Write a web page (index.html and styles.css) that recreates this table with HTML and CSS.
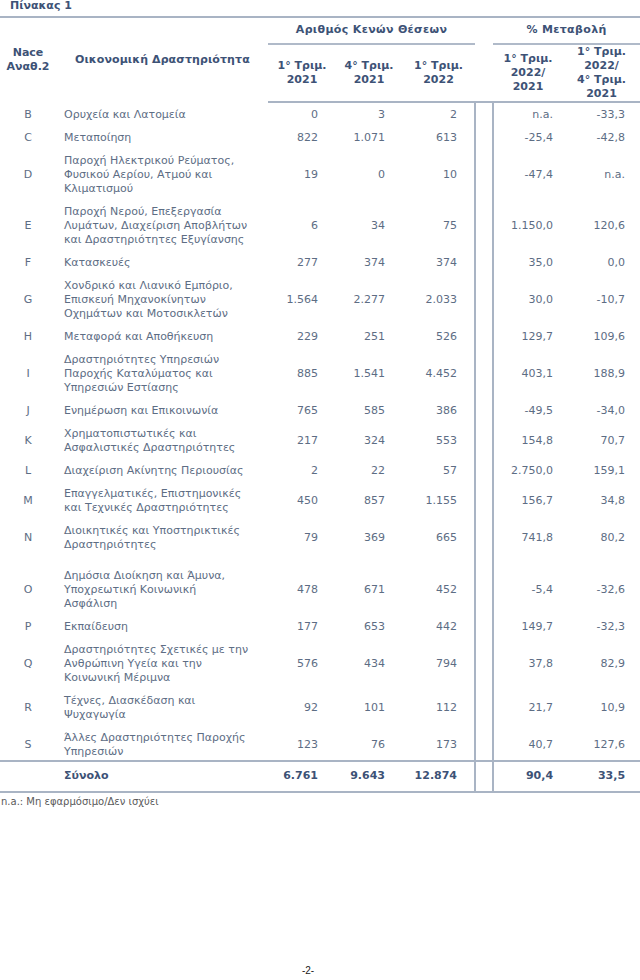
FILE: index.html
```html
<!DOCTYPE html>
<html lang="el">
<head>
<meta charset="utf-8">
<title>Πίνακας 1</title>
<link rel="stylesheet" href="styles.css">
</head>
<body>
<div class="page">
  <div class="title">Πίνακας 1</div>
  <table class="tbl">
    <colgroup>
      <col class="c-code"><col class="c-act"><col class="c-n1"><col class="c-n2"><col class="c-n3"><col class="c-gap"><col class="c-p1"><col class="c-p2">
    </colgroup>
    <thead>
      <tr class="h1">
        <th rowspan="2" class="code">Nace<br>Αναθ.2</th>
        <th rowspan="2" class="act">Οικονομική Δραστηριότητα</th>
        <th colspan="3" class="grp"><span>Αριθμός Κενών Θέσεων</span></th>
        <th class="gap"></th>
        <th colspan="2" class="grp"><span>% Μεταβολή</span></th>
      </tr>
      <tr class="h2">
        <th>1° Τριμ.<br>2021</th>
        <th>4° Τριμ.<br>2021</th>
        <th>1° Τριμ.<br>2022</th>
        <th class="gap"></th>
        <th>1° Τριμ.<br>2022/<br>2021</th>
        <th>1° Τριμ.<br>2022/<br>4° Τριμ.<br>2021</th>
      </tr>
    </thead>
    <tbody>
      <tr class="first"><td class="code">B</td><td class="act">Ορυχεία και Λατομεία</td><td class="n1">0</td><td class="n2">3</td><td class="n3">2</td><td class="gap"></td><td class="p1">n.a.</td><td class="p2">-33,3</td></tr>
      <tr><td class="code">C</td><td class="act">Μεταποίηση</td><td class="n1">822</td><td class="n2">1.071</td><td class="n3">613</td><td class="gap"></td><td class="p1">-25,4</td><td class="p2">-42,8</td></tr>
      <tr><td class="code">D</td><td class="act">Παροχή Ηλεκτρικού Ρεύματος,<br>Φυσικού Αερίου, Ατμού και<br>Κλιματισμού</td><td class="n1">19</td><td class="n2">0</td><td class="n3">10</td><td class="gap"></td><td class="p1">-47,4</td><td class="p2">n.a.</td></tr>
      <tr><td class="code">E</td><td class="act">Παροχή Νερού, Επεξεργασία<br>Λυμάτων, Διαχείριση Αποβλήτων<br>και Δραστηριότητες Εξυγίανσης</td><td class="n1">6</td><td class="n2">34</td><td class="n3">75</td><td class="gap"></td><td class="p1">1.150,0</td><td class="p2">120,6</td></tr>
      <tr><td class="code">F</td><td class="act">Κατασκευές</td><td class="n1">277</td><td class="n2">374</td><td class="n3">374</td><td class="gap"></td><td class="p1">35,0</td><td class="p2">0,0</td></tr>
      <tr><td class="code">G</td><td class="act">Χονδρικό και Λιανικό Εμπόριο,<br>Επισκευή Μηχανοκίνητων<br>Οχημάτων και Μοτοσικλετών</td><td class="n1">1.564</td><td class="n2">2.277</td><td class="n3">2.033</td><td class="gap"></td><td class="p1">30,0</td><td class="p2">-10,7</td></tr>
      <tr><td class="code">H</td><td class="act">Μεταφορά και Αποθήκευση</td><td class="n1">229</td><td class="n2">251</td><td class="n3">526</td><td class="gap"></td><td class="p1">129,7</td><td class="p2">109,6</td></tr>
      <tr><td class="code">I</td><td class="act">Δραστηριότητες Υπηρεσιών<br>Παροχής Καταλύματος και<br>Υπηρεσιών Εστίασης</td><td class="n1">885</td><td class="n2">1.541</td><td class="n3">4.452</td><td class="gap"></td><td class="p1">403,1</td><td class="p2">188,9</td></tr>
      <tr><td class="code">J</td><td class="act">Ενημέρωση και Επικοινωνία</td><td class="n1">765</td><td class="n2">585</td><td class="n3">386</td><td class="gap"></td><td class="p1">-49,5</td><td class="p2">-34,0</td></tr>
      <tr><td class="code">K</td><td class="act">Χρηματοπιστωτικές και<br>Ασφαλιστικές Δραστηριότητες</td><td class="n1">217</td><td class="n2">324</td><td class="n3">553</td><td class="gap"></td><td class="p1">154,8</td><td class="p2">70,7</td></tr>
      <tr><td class="code">L</td><td class="act">Διαχείριση Ακίνητης Περιουσίας</td><td class="n1">2</td><td class="n2">22</td><td class="n3">57</td><td class="gap"></td><td class="p1">2.750,0</td><td class="p2">159,1</td></tr>
      <tr><td class="code">M</td><td class="act">Επαγγελματικές, Επιστημονικές<br>και Τεχνικές Δραστηριότητες</td><td class="n1">450</td><td class="n2">857</td><td class="n3">1.155</td><td class="gap"></td><td class="p1">156,7</td><td class="p2">34,8</td></tr>
      <tr><td class="code">N</td><td class="act">Διοικητικές και Υποστηρικτικές<br>Δραστηριότητες</td><td class="n1">79</td><td class="n2">369</td><td class="n3">665</td><td class="gap"></td><td class="p1">741,8</td><td class="p2">80,2</td></tr>
      <tr class="spaced"><td class="code">O</td><td class="act">Δημόσια Διοίκηση και Άμυνα,<br>Υποχρεωτική Κοινωνική<br>Ασφάλιση</td><td class="n1">478</td><td class="n2">671</td><td class="n3">452</td><td class="gap"></td><td class="p1">-5,4</td><td class="p2">-32,6</td></tr>
      <tr><td class="code">P</td><td class="act">Εκπαίδευση</td><td class="n1">177</td><td class="n2">653</td><td class="n3">442</td><td class="gap"></td><td class="p1">149,7</td><td class="p2">-32,3</td></tr>
      <tr><td class="code">Q</td><td class="act">Δραστηριότητες Σχετικές με την<br>Ανθρώπινη Υγεία και την<br>Κοινωνική Μέριμνα</td><td class="n1">576</td><td class="n2">434</td><td class="n3">794</td><td class="gap"></td><td class="p1">37,8</td><td class="p2">82,9</td></tr>
      <tr><td class="code">R</td><td class="act">Τέχνες, Διασκέδαση και<br>Ψυχαγωγία</td><td class="n1">92</td><td class="n2">101</td><td class="n3">112</td><td class="gap"></td><td class="p1">21,7</td><td class="p2">10,9</td></tr>
      <tr class="last"><td class="code">S</td><td class="act">Άλλες Δραστηριότητες Παροχής<br>Υπηρεσιών</td><td class="n1">123</td><td class="n2">76</td><td class="n3">173</td><td class="gap"></td><td class="p1">40,7</td><td class="p2">127,6</td></tr>
    </tbody>
    <tfoot>
      <tr class="total"><td class="code"></td><td class="act">Σύνολο</td><td class="n1">6.761</td><td class="n2">9.643</td><td class="n3">12.874</td><td class="gap"></td><td class="p1">90,4</td><td class="p2">33,5</td></tr>
    </tfoot>
  </table>
  <div class="note">n.a.: Μη εφαρμόσιμο/Δεν ισχύει</div>
  <div class="pageno">-2-</div>
</div>
</body>
</html>
```
FILE: styles.css
```css
html, body {
  margin: 0;
  padding: 0;
  background: #ffffff;
}

.page {
  width: 640px;
  min-height: 980px;
  display: flex;
  flex-direction: column;
  font-family: "DejaVu Sans", Verdana, sans-serif;
  font-size: 11px;
  color: #5d6d84;
}

.title {
  font-weight: bold;
  color: #3d5276;
  padding: 0 0 0 10px;
  line-height: 11px;
  height: 16px;
}

.tbl {
  width: 640px;
  border-collapse: collapse;
  table-layout: fixed;
  line-height: 14px;
}

.c-code { width: 56px; }
.c-act { width: 212px; }
.c-n1 { width: 68px; }
.c-n2 { width: 66px; }
.c-n3 { width: 73px; }
.c-gap { width: 18px; }
.c-p1 { width: 70px; }
.c-p2 { width: 77px; }

.tbl th {
  font-weight: bold;
  color: #3d5276;
  padding: 0;
  text-align: center;
  vertical-align: middle;
}

.tbl thead tr.h1 th {
  border-top: 2px solid #a9b4c4;
}

.tbl thead tr.h1 th.grp {
  height: 24px;
  padding: 0;
}

.tbl thead tr.h1 th.grp span {
  display: block;
  border-bottom: 2px solid #b0bac9;
  padding: 5px 0 6px;
  letter-spacing: 0.35px;
}

.tbl thead tr.h1 th.act {
  text-align: left;
  padding-left: 19px;
  letter-spacing: 0.1px;
}

.tbl thead tr.h2 th {
  height: 56px;
  border-bottom: 2px solid #a9b4c4;
}

.tbl td {
  padding: 4.5px 0;
  vertical-align: middle;
  white-space: nowrap;
}

.tbl tbody tr.first td { padding-top: 5px; }
.tbl tbody tr.spaced td { padding-top: 12.5px; }
.tbl tbody tr.last td { padding-bottom: 0.5px; }

.tbl td.code { text-align: center; }
.tbl td.act { text-align: left; padding-left: 8px; }
.tbl td.n1 { text-align: right; padding-right: 18px; }
.tbl td.n2 { text-align: right; padding-right: 17px; }
.tbl td.n3 { text-align: right; padding-right: 17px; }
.tbl td.p1 { text-align: right; padding-right: 10px; }
.tbl td.p2 { text-align: right; padding-right: 15px; }

.tbl td.gap {
  border-left: 2px solid #a9b4c4;
  border-right: 2px solid #a9b4c4;
}

.tbl tfoot tr.total td {
  border-top: 2px solid #a9b4c4;
  border-bottom: 2px solid #a9b4c4;
  font-weight: bold;
  color: #3d5276;
  padding-top: 7px;
  padding-bottom: 8px;
}

.tbl tfoot tr.total td.gap { padding: 0; }

.note {
  font-size: 10px;
  color: #5a5a5a;
  padding: 3px 0 0 1px;
  line-height: 12px;
}

.pageno {
  margin-top: auto;
  margin-bottom: 3px;
  text-align: center;
  font-family: "Liberation Sans", Arial, sans-serif;
  font-size: 10px;
  color: #222222;
  padding-right: 24px;
  line-height: 12px;
}
```
